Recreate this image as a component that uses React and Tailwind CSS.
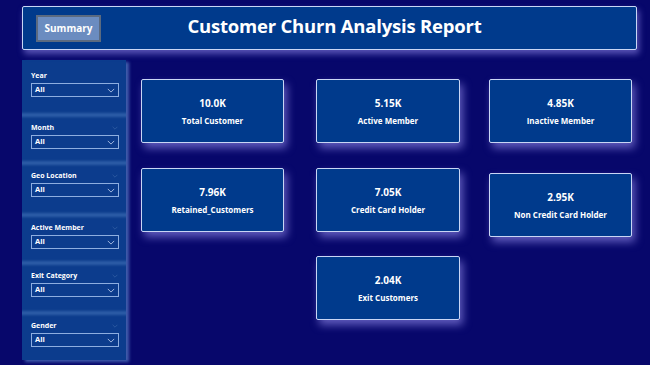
import React from "react";

const font = { fontFamily: '"Open Sans", "Noto Sans", Arial, sans-serif' };

const slicers = [
  { label: "Year", h: "h-[53px]" },
  { label: "Month", h: "h-[48px]" },
  { label: "Geo Location", h: "h-[52px]" },
  { label: "Active Member", h: "h-[48px]" },
  { label: "Exit Category", h: "h-[50px]" },
  { label: "Gender", h: "h-[49px]" },
];

const Chevron = ({ className }) => (
  <svg viewBox="0 0 10 6" className={className} fill="none" stroke="currentColor" strokeWidth="1">
    <path d="M1 1 L5 5 L9 1" />
  </svg>
);

const Slicer = ({ label, h, first }) => (
  <div className={`${h} ${first ? "pt-[11px]" : ""}`}>
    {!first && <div className="h-[4px] -mx-[2px] mb-[6px] bg-[#2c5ca6] blur-[1px]" />}
    <div className="pl-[9px] pr-[8px] flex items-center justify-between">
      <span className="text-[7px] font-bold text-white leading-[10px]">{label}</span>
      {!first && <Chevron className="w-[6px] h-[4px] text-[#3f69ad]" />}
    </div>
    <div className="ml-[9px] mr-[7px] mt-[2px] h-[14px] border border-[#8eaee0] flex items-center justify-between px-[3px]">
      <span className="text-[7.5px] font-bold text-white leading-none">All</span>
      <Chevron className="w-[8px] h-[5px] text-[#c5d6f2]" />
    </div>
  </div>
);

const Card = ({ value, label, className = "" }) => (
  <div
    className={`h-[64px] bg-[#003a8c] border border-[#c9d6f5] rounded-[2px] flex flex-col items-center justify-center shadow-[3px_5px_8px_rgba(170,160,255,0.55)] ${className}`}
  >
    <span className="text-[10px] font-bold text-white leading-[14px]">{value}</span>
    <span className="text-[8px] font-bold text-white leading-[12px] mt-[5px]">{label}</span>
  </div>
);

export default function App() {
  return (
    <div className="w-[650px] h-[365px] bg-[#07076b] overflow-hidden" style={font}>
      <div className="ml-[22px] mt-[6px] w-[615px] h-[44px] bg-[#003a8c] border border-[#c9d6f5] rounded-[2px] shadow-[2px_4px_6px_rgba(170,160,255,0.5)] flex items-center relative">
        <div className="ml-[13px] w-[65px] h-[27px] bg-[#6b8cc0] border-2 border-[#5b6a80] flex items-center justify-center">
          <span className="text-[10px] font-bold text-white">Summary</span>
        </div>
        <div className="absolute left-0 right-0 top-0 bottom-0 flex items-center justify-center pointer-events-none">
          <span className="text-[18.5px] font-bold text-white tracking-[-0.2px] ml-[10px] mb-[5px]">
            Customer Churn Analysis Report
          </span>
        </div>
      </div>
      <div className="flex mt-[10px]">
        <div className="ml-[22px] w-[104px] h-[300px] bg-[#0c3c8d] shadow-[3px_2px_3px_rgba(90,130,200,0.7)] overflow-hidden">
          {slicers.map((s, i) => (
            <Slicer key={s.label} label={s.label} h={s.h} first={i === 0} />
          ))}
        </div>
        <div className="flex ml-[15px] mt-[19px]">
          <div className="flex flex-col w-[143px] gap-[25px]">
            <Card value="10.0K" label="Total Customer" />
            <Card value="7.96K" label="Retained_Customers" />
          </div>
          <div className="flex flex-col w-[144px] ml-[32px] gap-[25px]">
            <Card value="5.15K" label="Active Member" />
            <Card value="7.05K" label="Credit Card Holder" />
            <Card value="2.04K" label="Exit Customers" className="h-[62px] mt-[-1px]" />
          </div>
          <div className="flex flex-col w-[143px] ml-[29px] gap-[30px]">
            <Card value="4.85K" label="Inactive Member" />
            <Card value="2.95K" label="Non Credit Card Holder" />
          </div>
        </div>
      </div>
    </div>
  );
}
